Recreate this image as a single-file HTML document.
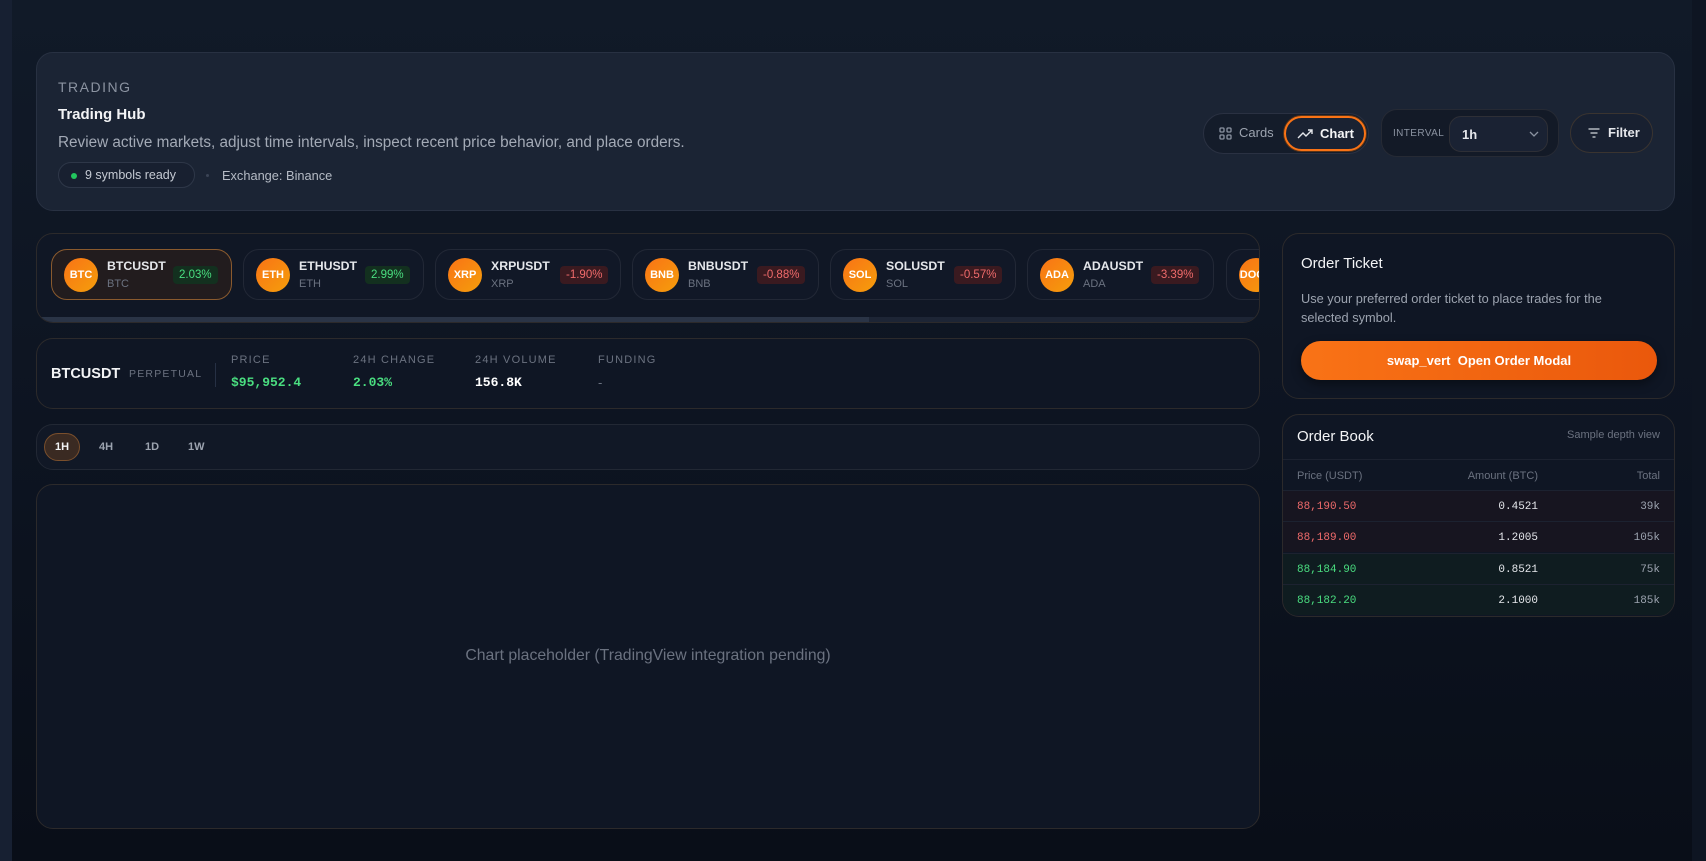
<!DOCTYPE html>
<html><head><meta charset="utf-8"><style>
*{box-sizing:border-box;margin:0;padding:0}
body{width:1706px;height:861px;overflow:hidden;font-family:"Liberation Sans",sans-serif;background:linear-gradient(180deg,#111a28 0%,#0d1421 50%,#090e18 100%);position:relative;color:#e5e7eb}
.abs{position:absolute}
.card{position:absolute;border:1px solid #2c2a2b;border-radius:17px;background:#0f1624}
.mono{font-family:"Liberation Mono",monospace}
.chip{position:absolute;top:249px;height:51px;border:1px solid #222836;border-radius:16px;background:#111827}
.chip .c{position:absolute;left:12px;top:8px;width:34px;height:34px;border-radius:50%;background:linear-gradient(135deg,#f97316,#f59e0b);color:#fff;font-weight:bold;font-size:11px;text-align:center;line-height:34px}
.chip .s{position:absolute;left:55px;top:9px;font-size:12.3px;font-weight:bold;color:#e5e7eb}
.chip .b{position:absolute;left:55px;top:28px;font-size:11px;color:#6b7280}
.chip .p{position:absolute;top:16px;height:18px;padding:0 6px;font-size:11.5px;line-height:18px;border-radius:4px}
.up{color:#4ade80;background:#13301f}.dn{color:#f06b6b;background:#3a1a20}
.lab{font-size:11px;letter-spacing:1.2px;color:#6b7280}
.row{position:absolute;left:0;right:0;height:31px;border-top:1px solid #1c2230;font-size:11px}
.row span{position:absolute;top:10px}
</style></head><body>
<div class="abs" style="left:0;top:0;width:12px;height:861px;background:#172032"></div>
<div class="abs" style="right:0;top:0;width:14px;height:861px;background:#0e1522"></div>

<!-- header -->
<div class="card" style="left:36px;top:52px;width:1639px;height:159px;background:#1b2434;border-color:#283142">
 <div class="abs" style="left:21px;top:26px;font-size:14px;letter-spacing:1.5px;color:#8b93a1">TRADING</div>
 <div class="abs" style="left:21px;top:53px;font-size:15px;font-weight:bold;color:#f3f4f6">Trading Hub</div>
 <div class="abs" style="left:21px;top:81px;font-size:15.3px;color:#a3aab6">Review active markets, adjust time intervals, inspect recent price behavior, and place orders.</div>
 <div class="abs" style="left:21px;top:109px;height:26px;width:137px;border:1px solid #2e3748;border-radius:13px;background:#182030;font-size:12.5px;color:#c5cad3;line-height:24px;padding-left:26px">9 symbols ready<span class="abs" style="left:12px;top:10px;width:6px;height:6px;border-radius:50%;background:#22c55e"></span></div>
 <div class="abs" style="left:169px;top:121px;width:3px;height:3px;border-radius:50%;background:#3b4455"></div>
 <div class="abs" style="left:185px;top:115px;font-size:12.8px;color:#b5bbc5">Exchange: Binance</div>
 <!-- cards/chart -->
 <div class="abs" style="left:1166px;top:60px;width:166px;height:41px;border:1px solid #2a3142;border-radius:21px;background:#141c2a">
  <svg class="abs" style="left:15px;top:13px" width="13" height="13" viewBox="0 0 13 13" fill="none" stroke="#8b93a1" stroke-width="1.3"><rect x="1" y="1" width="4" height="4" rx="1"/><rect x="8" y="1" width="4" height="4" rx="1"/><rect x="1" y="8" width="4" height="4" rx="1"/><rect x="8" y="8" width="4" height="4" rx="1"/></svg>
  <div class="abs" style="left:35px;top:11px;font-size:13px;color:#9ca3af">Cards</div>
  <div class="abs" style="left:80px;top:2px;width:82px;height:35px;border:2px solid #f97316;border-radius:18px;background:#1a2232;box-shadow:0 0 0 1px #5a3418">
   <svg class="abs" style="left:11px;top:11px" width="16" height="10" viewBox="0 0 16 10" fill="none" stroke="#e5e7eb" stroke-width="1.4"><path d="M1 9 L6 4 L9 7 L15 1 M11 1 H15 V5"/></svg>
   <div class="abs" style="left:34px;top:8px;font-size:13px;font-weight:bold;color:#f3f4f6">Chart</div>
  </div>
 </div>
 <!-- interval -->
 <div class="abs" style="left:1344px;top:56px;width:178px;height:48px;border:1px solid #262a34;border-radius:16px;background:#131a27">
  <div class="abs" style="left:11px;top:18px;font-size:10px;letter-spacing:.4px;color:#8b93a1">INTERVAL</div>
  <div class="abs" style="left:67px;top:6px;width:99px;height:36px;border:1px solid #2e2f36;border-radius:12px;background:#1a2233;font-size:13px;font-weight:bold;color:#e5e7eb;padding:10px 0 0 12px">1h
   <svg class="abs" style="left:79px;top:14px" width="10" height="6" viewBox="0 0 10 6" fill="none" stroke="#8b93a1" stroke-width="1.3"><path d="M1 1 L5 5 L9 1"/></svg></div>
 </div>
 <!-- filter -->
 <div class="abs" style="left:1533px;top:60px;width:83px;height:40px;border:1px solid #3a3430;border-radius:20px;background:#182030">
  <svg class="abs" style="left:17px;top:14px" width="12" height="10" viewBox="0 0 12 10" fill="none" stroke="#d1d5db" stroke-width="1.3"><path d="M0.5 1 H11.5 M2.5 5 H9.5 M4.5 9 H7.5"/></svg>
  <div class="abs" style="left:37px;top:11px;font-size:13px;font-weight:bold;color:#e5e7eb">Filter</div>
 </div>
</div>

<!-- symbol strip -->
<div class="card" style="left:36px;top:233px;width:1224px;height:90px;overflow:hidden;background:#101725">
 <div class="abs" style="left:0;top:83px;width:1224px;height:7px;background:#1d2535"></div>
 <div class="abs" style="left:0;top:83px;width:832px;height:7px;background:#2a3446"></div>
</div>
<div style="position:absolute;left:36px;top:233px;width:1223px;height:90px;overflow:hidden">
<div class="chip" style="left:15px;top:16px;width:181px;border-color:#8a5a2e;background:#221c1e"><div class="c">BTC</div><div class="s">BTCUSDT</div><div class="b">BTC</div><div class="p up" style="left:121px">2.03%</div></div>
<div class="chip" style="left:207px;top:16px;width:181px"><div class="c">ETH</div><div class="s">ETHUSDT</div><div class="b">ETH</div><div class="p up" style="left:121px">2.99%</div></div>
<div class="chip" style="left:399px;top:16px;width:186px"><div class="c">XRP</div><div class="s">XRPUSDT</div><div class="b">XRP</div><div class="p dn" style="left:124px">-1.90%</div></div>
<div class="chip" style="left:596px;top:16px;width:187px"><div class="c">BNB</div><div class="s">BNBUSDT</div><div class="b">BNB</div><div class="p dn" style="left:124px">-0.88%</div></div>
<div class="chip" style="left:794px;top:16px;width:186px"><div class="c">SOL</div><div class="s">SOLUSDT</div><div class="b">SOL</div><div class="p dn" style="left:123px">-0.57%</div></div>
<div class="chip" style="left:991px;top:16px;width:187px"><div class="c">ADA</div><div class="s">ADAUSDT</div><div class="b">ADA</div><div class="p dn" style="left:123px">-3.39%</div></div>
<div class="chip" style="left:1190px;top:16px;width:187px"><div class="c">DOGE</div></div>
</div>

<!-- info -->
<div class="card" style="left:36px;top:338px;width:1224px;height:71px">
 <div class="abs" style="left:14px;top:27px;font-size:14.5px;font-weight:bold;color:#f3f4f6">BTCUSDT</div>
 <div class="abs lab" style="left:92px;top:29px;font-size:10.5px">PERPETUAL</div>
 <div class="abs" style="left:178px;top:24px;width:1px;height:24px;background:#263044"></div>
 <div class="abs lab" style="left:194px;top:15px">PRICE</div>
 <div class="abs mono" style="left:194px;top:36px;font-size:13px;color:#4ade80;font-weight:bold">$95,952.4</div>
 <div class="abs lab" style="left:316px;top:15px">24H CHANGE</div>
 <div class="abs mono" style="left:316px;top:36px;font-size:13px;color:#4ade80;font-weight:bold">2.03%</div>
 <div class="abs lab" style="left:438px;top:15px">24H VOLUME</div>
 <div class="abs mono" style="left:438px;top:36px;font-size:13px;color:#fff;font-weight:bold">156.8K</div>
 <div class="abs lab" style="left:561px;top:15px">FUNDING</div>
 <div class="abs" style="left:561px;top:36px;font-size:13px;color:#6b7280">-</div>
</div>

<!-- timeframe -->
<div class="card" style="left:36px;top:424px;width:1224px;height:46px;background:#111826;border-color:#222834">
 <div class="abs" style="left:7px;top:8px;width:36px;height:28px;border:1px solid #7a4f2c;border-radius:14px;background:#3a2a22;font-size:11px;font-weight:bold;color:#f3f4f6;text-align:center;line-height:26px">1H</div>
 <div class="abs" style="left:62px;top:16px;font-size:11px;font-weight:bold;color:#9ca3af">4H</div>
 <div class="abs" style="left:108px;top:16px;font-size:11px;font-weight:bold;color:#9ca3af">1D</div>
 <div class="abs" style="left:151px;top:16px;font-size:11px;font-weight:bold;color:#9ca3af">1W</div>
</div>

<!-- chart -->
<div class="card" style="left:36px;top:484px;width:1224px;height:345px">
 <div class="abs" style="left:0;right:0;top:162px;text-align:center;font-size:15.8px;color:#6b7280">Chart placeholder (TradingView integration pending)</div>
</div>

<!-- order ticket -->
<div class="card" style="left:1282px;top:233px;width:393px;height:166px">
 <div class="abs" style="left:18px;top:21px;font-size:15px;color:#f3f4f6">Order Ticket</div>
 <div class="abs" style="left:18px;top:55px;width:330px;font-size:12.8px;line-height:19px;color:#9ca3af">Use your preferred order ticket to place trades for the selected symbol.</div>
 <div class="abs" style="left:18px;top:107px;width:356px;height:39px;border-radius:20px;background:linear-gradient(90deg,#f97316,#ea580c);box-shadow:0 4px 10px rgba(0,0,0,.4);text-align:center;line-height:39px;font-size:13px;font-weight:bold;color:#fff">swap_vert&nbsp; Open Order Modal</div>
</div>

<!-- order book -->
<div class="card" style="left:1282px;top:414px;width:393px;height:203px;overflow:hidden">
 <div class="abs" style="left:14px;top:13px;font-size:15px;color:#f3f4f6">Order Book</div>
 <div class="abs" style="right:14px;top:14px;font-size:11px;color:#6b7280">Sample depth view</div>
 <div class="row" style="top:44px;height:31px;color:#6b7280"><span style="left:14px">Price (USDT)</span><span style="left:155px;width:100px;text-align:right">Amount (BTC)</span><span style="right:14px">Total</span></div>
 <div class="row mono" style="top:75px;background:#171520"><span style="left:14px;color:#f06b6b">88,190.50</span><span style="left:155px;width:100px;text-align:right;color:#e5e7eb">0.4521</span><span style="right:14px;color:#9ca3af">39k</span></div>
 <div class="row mono" style="top:106px;background:#171520"><span style="left:14px;color:#f06b6b">88,189.00</span><span style="left:155px;width:100px;text-align:right;color:#e5e7eb">1.2005</span><span style="right:14px;color:#9ca3af">105k</span></div>
 <div class="row mono" style="top:138px;background:#0f1c20"><span style="left:14px;color:#4ade80">88,184.90</span><span style="left:155px;width:100px;text-align:right;color:#e5e7eb">0.8521</span><span style="right:14px;color:#9ca3af">75k</span></div>
 <div class="row mono" style="top:169px;background:#0f1c20"><span style="left:14px;color:#4ade80">88,182.20</span><span style="left:155px;width:100px;text-align:right;color:#e5e7eb">2.1000</span><span style="right:14px;color:#9ca3af">185k</span></div>
</div>
</body></html>
